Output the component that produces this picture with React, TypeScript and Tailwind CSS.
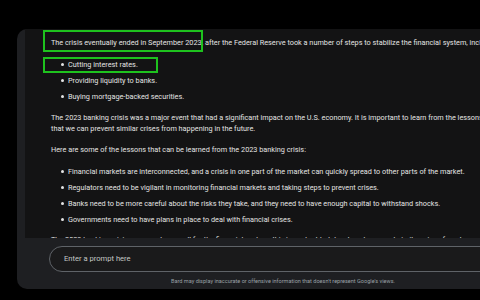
import React from 'react';

const bulletsTop = ['Cutting interest rates.', 'Providing liquidity to banks.', 'Buying mortgage-backed securities.'];

const lessons = [
    'Financial markets are interconnected, and a crisis in one part of the market can quickly spread to other parts of the market.',
    'Regulators need to be vigilant in monitoring financial markets and taking steps to prevent crises.',
    'Banks need to be more careful about the risks they take, and they need to have enough capital to withstand shocks.',
    'Governments need to have plans in place to deal with financial crises.',
];

function Bullet({ text }: { text: string }) {
    return (
        <div className="flex items-center whitespace-nowrap">
            <span className="ml-[10px] mr-[4px] h-[3px] w-[3px] rounded-full bg-[#e3e3e3]" />
            <span>{text}</span>
        </div>
    );
}

export default function App() {
    return (
        <div
            className="relative h-[300px] w-[480px] overflow-hidden bg-black pl-[17px] pt-[29px] text-[#e3e3e3]"
            style={{ fontFamily: 'Roboto, "Liberation Sans", sans-serif' }}
        >
            <div className="flex h-[260px] w-[520px] flex-col rounded-l-[10px] bg-[#1e1f22]">
                {/* scrolling conversation */}
                <div className="ml-[8px] h-[209px] overflow-hidden bg-[#131314] pl-[26px] pt-[8px] text-[7.3px] leading-[11px]">
                    <p className="whitespace-nowrap">
                        The crisis eventually ended in September 2023, after the Federal Reserve took a number of steps to stabilize the financial system, including:
                    </p>
                    <div className="mt-[11px] flex flex-col gap-[5px]">
                        {bulletsTop.map((b) => (
                            <Bullet key={b} text={b} />
                        ))}
                    </div>
                    <p className="mt-[10px] whitespace-nowrap">
                        The 2023 banking crisis was a major event that had a significant impact on the U.S. economy. It is important to learn from the lessons
                        <br />
                        that we can prevent similar crises from happening in the future.
                    </p>
                    <p className="mt-[10px] whitespace-nowrap">Here are some of the lessons that can be learned from the 2023 banking crisis:</p>
                    <div className="mt-[11px] flex flex-col gap-[5px]">
                        {lessons.map((b) => (
                            <Bullet key={b} text={b} />
                        ))}
                    </div>
                    <p className="mt-[9px] whitespace-nowrap">
                        The 2023 banking crisis was a wake-up call for the financial system. It is important to take steps to prevent similar crises from happening again.
                    </p>
                </div>

                {/* prompt box */}
                <div className="ml-[32px] mt-[8px] flex h-[26px] items-center rounded-full border border-[#5f6368] bg-[#1a1a1b] pl-[14px] text-[7.6px] text-[#c4c7c5]">
                    Enter a prompt here
                </div>
                <p className="mt-[5px] whitespace-nowrap pl-[154px] text-[5.55px] text-[#9aa0a6]">
                    Bard may display inaccurate or offensive information that doesn't represent Google's views.
                </p>
            </div>

            {/* annotation boxes */}
            <div className="absolute left-[43px] top-[30px] h-[22px] w-[160px] border-2 border-[#1ec21e]" />
            <div className="absolute left-[43px] top-[57px] h-[16px] w-[115px] border-2 border-[#1ec21e]" />
        </div>
    );
}
